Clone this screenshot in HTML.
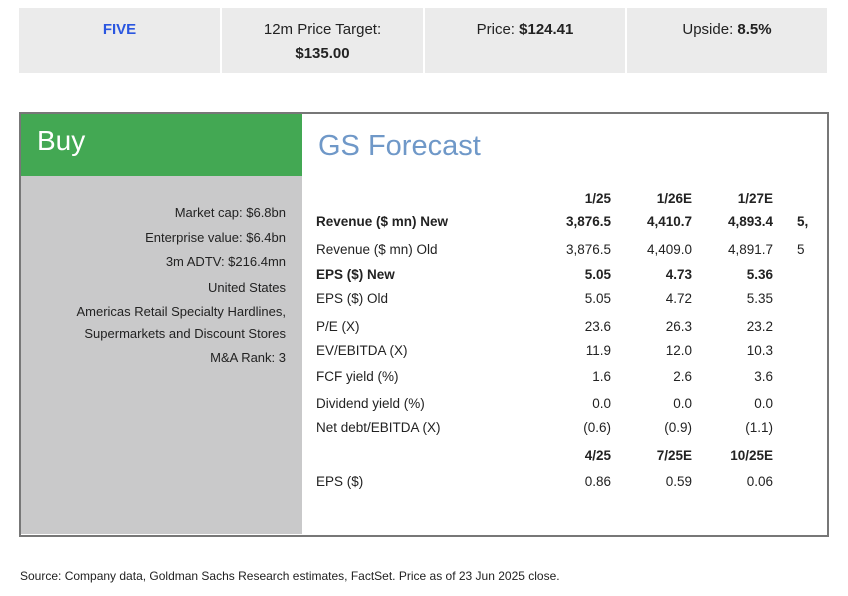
<!DOCTYPE html>
<html><head><meta charset="utf-8"><style>
body{margin:0;width:848px;height:596px;background:#fff;position:relative;font-family:"Liberation Sans",sans-serif;color:#222;overflow:hidden}
.a{position:absolute;white-space:nowrap}
.cell{position:absolute;top:8px;height:65px;background:#ebebeb;text-align:center;font-size:15px;line-height:24px;padding-top:10px;box-sizing:border-box}
.lt{position:absolute;right:562px;font-size:13px;text-align:right;white-space:nowrap}
.row{position:absolute;left:316px;font-size:13.5px;white-space:nowrap}
.n{position:absolute;font-size:13.5px;text-align:right;width:90px;white-space:nowrap}
b{font-weight:bold}
</style></head><body>
<div class="cell" style="left:19px;width:201px;color:#2a56e0;font-weight:bold">FIVE</div>
<div class="cell" style="left:222px;width:201px">12m Price Target:<br><b>$135.00</b></div>
<div class="cell" style="left:425px;width:200px">Price: <b>$124.41</b></div>
<div class="cell" style="left:627px;width:200px">Upside: <b>8.5%</b></div>

<div class="a" style="left:19px;top:112px;width:806px;height:421px;border:2px solid #777"></div>
<div class="a" style="left:21px;top:114px;width:281px;height:62px;background:#43a853"></div>
<div class="a" style="left:21px;top:176px;width:281px;height:358px;background:#c9c9ca"></div>
<div class="a" style="left:37px;top:125px;font-size:28px;color:#fff">Buy</div>
<div class="a" style="left:318px;top:130px;font-size:29px;color:#6f98c8">GS Forecast</div>

<div class="lt" style="top:205px">Market cap: $6.8bn</div>
<div class="lt" style="top:230px">Enterprise value: $6.4bn</div>
<div class="lt" style="top:254px">3m ADTV: $216.4mn</div>
<div class="lt" style="top:280px">United States</div>
<div class="lt" style="top:304px">Americas Retail Specialty Hardlines,</div>
<div class="lt" style="top:326px">Supermarkets and Discount Stores</div>
<div class="lt" style="top:350px">M&amp;A Rank: 3</div>

<div class="row" style="top:214px;font-weight:bold">Revenue ($ mn) New</div>
<div class="row" style="top:242px">Revenue ($ mn) Old</div>
<div class="row" style="top:267px;font-weight:bold">EPS ($) New</div>
<div class="row" style="top:291px">EPS ($) Old</div>
<div class="row" style="top:319px">P/E (X)</div>
<div class="row" style="top:343px">EV/EBITDA (X)</div>
<div class="row" style="top:369px">FCF yield (%)</div>
<div class="row" style="top:396px">Dividend yield (%)</div>
<div class="row" style="top:420px">Net debt/EBITDA (X)</div>
<div class="row" style="top:474px">EPS ($)</div>

<div class="n" style="left:521px;top:191px;font-weight:bold">1/25</div>
<div class="n" style="left:602px;top:191px;font-weight:bold">1/26E</div>
<div class="n" style="left:683px;top:191px;font-weight:bold">1/27E</div>
<div class="n" style="left:521px;top:214px;font-weight:bold">3,876.5</div>
<div class="n" style="left:602px;top:214px;font-weight:bold">4,410.7</div>
<div class="n" style="left:683px;top:214px;font-weight:bold">4,893.4</div>
<div class="a" style="left:797px;top:214px;font-size:13.5px;font-weight:bold">5,</div>
<div class="n" style="left:521px;top:242px">3,876.5</div>
<div class="n" style="left:602px;top:242px">4,409.0</div>
<div class="n" style="left:683px;top:242px">4,891.7</div>
<div class="a" style="left:797px;top:242px;font-size:13.5px">5</div>
<div class="n" style="left:521px;top:267px;font-weight:bold">5.05</div>
<div class="n" style="left:602px;top:267px;font-weight:bold">4.73</div>
<div class="n" style="left:683px;top:267px;font-weight:bold">5.36</div>
<div class="n" style="left:521px;top:291px">5.05</div>
<div class="n" style="left:602px;top:291px">4.72</div>
<div class="n" style="left:683px;top:291px">5.35</div>
<div class="n" style="left:521px;top:319px">23.6</div>
<div class="n" style="left:602px;top:319px">26.3</div>
<div class="n" style="left:683px;top:319px">23.2</div>
<div class="n" style="left:521px;top:343px">11.9</div>
<div class="n" style="left:602px;top:343px">12.0</div>
<div class="n" style="left:683px;top:343px">10.3</div>
<div class="n" style="left:521px;top:369px">1.6</div>
<div class="n" style="left:602px;top:369px">2.6</div>
<div class="n" style="left:683px;top:369px">3.6</div>
<div class="n" style="left:521px;top:396px">0.0</div>
<div class="n" style="left:602px;top:396px">0.0</div>
<div class="n" style="left:683px;top:396px">0.0</div>
<div class="n" style="left:521px;top:420px">(0.6)</div>
<div class="n" style="left:602px;top:420px">(0.9)</div>
<div class="n" style="left:683px;top:420px">(1.1)</div>
<div class="n" style="left:521px;top:448px;font-weight:bold">4/25</div>
<div class="n" style="left:602px;top:448px;font-weight:bold">7/25E</div>
<div class="n" style="left:683px;top:448px;font-weight:bold">10/25E</div>
<div class="n" style="left:521px;top:474px">0.86</div>
<div class="n" style="left:602px;top:474px">0.59</div>
<div class="n" style="left:683px;top:474px">0.06</div>

<div class="a" style="left:20px;top:569px;font-size:12px">Source: Company data, Goldman Sachs Research estimates, FactSet. Price as of 23 Jun 2025 close.</div>
</body></html>
